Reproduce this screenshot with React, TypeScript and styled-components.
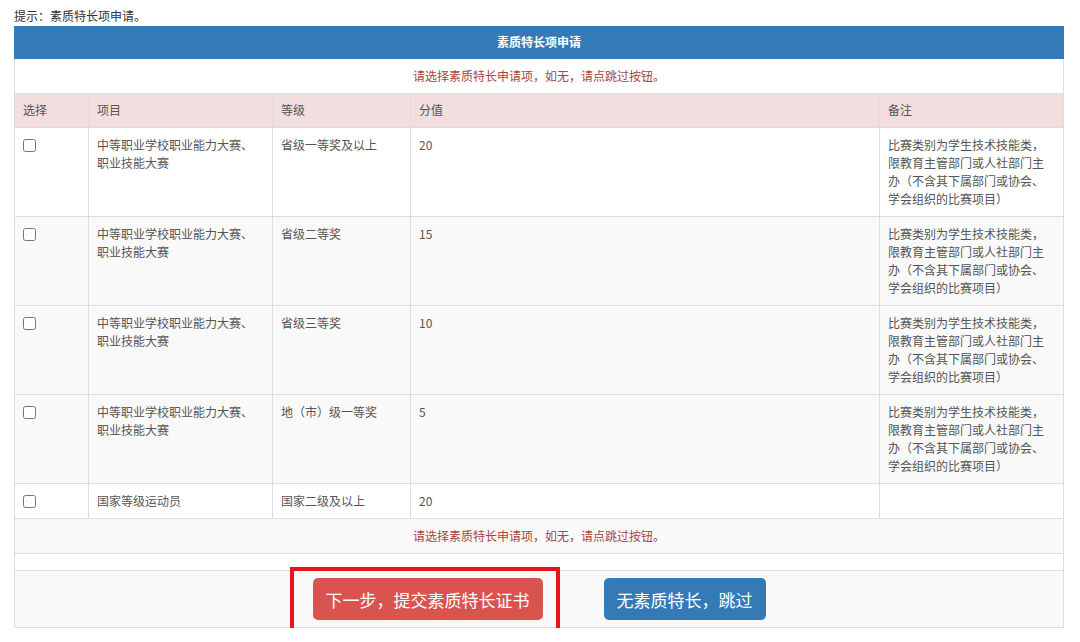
import styled, { createGlobalStyle } from 'styled-components';

const GlobalStyle = createGlobalStyle`
  html, body {
    margin: 0;
    padding: 0;
    background: #fff;
  }
  body {
    font-family: "Noto Sans CJK SC", "Noto Sans", "Liberation Sans", sans-serif;
    font-size: 12px;
    color: #555;
  }
`;

const Page = styled.div`
  padding: 7px 0 0 14px;
  width: 1049px;
`;

const Hint = styled.div`
  line-height: 18px;
  color: #333;
  margin-bottom: 1px;
`;

const Table = styled.table`
  width: 100%;
  border-collapse: collapse;
  table-layout: fixed;
  border: 1px solid #ddd;
`;

const Row = styled.tr<{ $bg?: string }>`
  background: ${(p) => p.$bg || '#fff'};
`;

const Cell = styled.td`
  border: 1px solid #ddd;
  padding: 8px;
  line-height: 18px;
  vertical-align: top;
  text-align: left;
`;

const TitleCell = styled(Cell)`
  background: #337ab7;
  border-color: #337ab7;
  color: #fff;
  font-weight: bold;
  text-align: center;
  padding: 6px 8px 7px;
`;

const MessageCell = styled(Cell)`
  text-align: center;
  color: #a94442;
`;

const HeadCell = styled(Cell)`
  background: #f2dede;
  font-weight: normal;
  padding: 7px 8px 8px;
`;

const Check = styled.input`
  margin: 3px 0 0 0;
  width: 13px;
  height: 13px;
  display: block;
`;

const SpacerCell = styled.td`
  border: 1px solid #ddd;
  padding: 0;
  height: 16px;
`;

const ButtonCell = styled(Cell)`
  padding: 7px 8px 7px;
`;

const ButtonBar = styled.div`
  display: flex;
  justify-content: center;
  gap: 61px;
`;

const Highlight = styled.div`
  position: relative;

  &::after {
    content: '';
    position: absolute;
    top: -11px;
    bottom: -13px;
    left: -23px;
    right: -17px;
    border: 4px solid #e8141b;
    pointer-events: none;
  }
`;

const Button = styled.button<{ $variant: 'danger' | 'primary' }>`
  height: 42px;
  padding: 0 13px;
  border: none;
  border-radius: 5px;
  font-family: inherit;
  font-size: 17px;
  color: #fff;
  cursor: pointer;
  background: ${(p) => (p.$variant === 'danger' ? '#d9534f' : '#337ab7')};
`;

const items = [
  { name: '中等职业学校职业能力大赛、职业技能大赛', level: '省级一等奖及以上', score: 20, note: true, bg: '#fff' },
  { name: '中等职业学校职业能力大赛、职业技能大赛', level: '省级二等奖', score: 15, note: true, bg: '#f9f9f9' },
  { name: '中等职业学校职业能力大赛、职业技能大赛', level: '省级三等奖', score: 10, note: true, bg: '#f9f9f9' },
  { name: '中等职业学校职业能力大赛、职业技能大赛', level: '地（市）级一等奖', score: 5, note: true, bg: '#f9f9f9' },
  { name: '国家等级运动员', level: '国家二级及以上', score: 20, note: false, bg: '#fff' },
];

const NOTE = '比赛类别为学生技术技能类，限教育主管部门或人社部门主办（不含其下属部门或协会、学会组织的比赛项目）';
const MSG = '请选择素质特长申请项，如无，请点跳过按钮。';

export default function App() {
  return (
    <>
      <GlobalStyle />
      <Page>
        <Hint>提示：素质特长项申请。</Hint>
        <Table>
          <colgroup>
            <col style={{ width: 74 }} />
            <col style={{ width: 184 }} />
            <col style={{ width: 138 }} />
            <col style={{ width: 469 }} />
            <col style={{ width: 184 }} />
          </colgroup>
          <tbody>
            <Row>
              <TitleCell colSpan={5}>素质特长项申请</TitleCell>
            </Row>
            <Row>
              <MessageCell colSpan={5}>{MSG}</MessageCell>
            </Row>
            <Row>
              <HeadCell>选择</HeadCell>
              <HeadCell>项目</HeadCell>
              <HeadCell>等级</HeadCell>
              <HeadCell>分值</HeadCell>
              <HeadCell>备注</HeadCell>
            </Row>
            {items.map((it, i) => (
              <Row key={i} $bg={it.bg}>
                <Cell>
                  <Check type="checkbox" />
                </Cell>
                <Cell>{it.name}</Cell>
                <Cell>{it.level}</Cell>
                <Cell>{it.score}</Cell>
                <Cell>{it.note ? NOTE : ''}</Cell>
              </Row>
            ))}
            <Row $bg="#f9f9f9">
              <MessageCell colSpan={5}>{MSG}</MessageCell>
            </Row>
            <Row>
              <SpacerCell colSpan={5} />
            </Row>
            <Row $bg="#f9f9f9">
              <ButtonCell colSpan={5}>
                <ButtonBar>
                  <Highlight>
                    <Button $variant="danger">下一步，提交素质特长证书</Button>
                  </Highlight>
                  <Button $variant="primary">无素质特长，跳过</Button>
                </ButtonBar>
              </ButtonCell>
            </Row>
          </tbody>
        </Table>
      </Page>
    </>
  );
}
